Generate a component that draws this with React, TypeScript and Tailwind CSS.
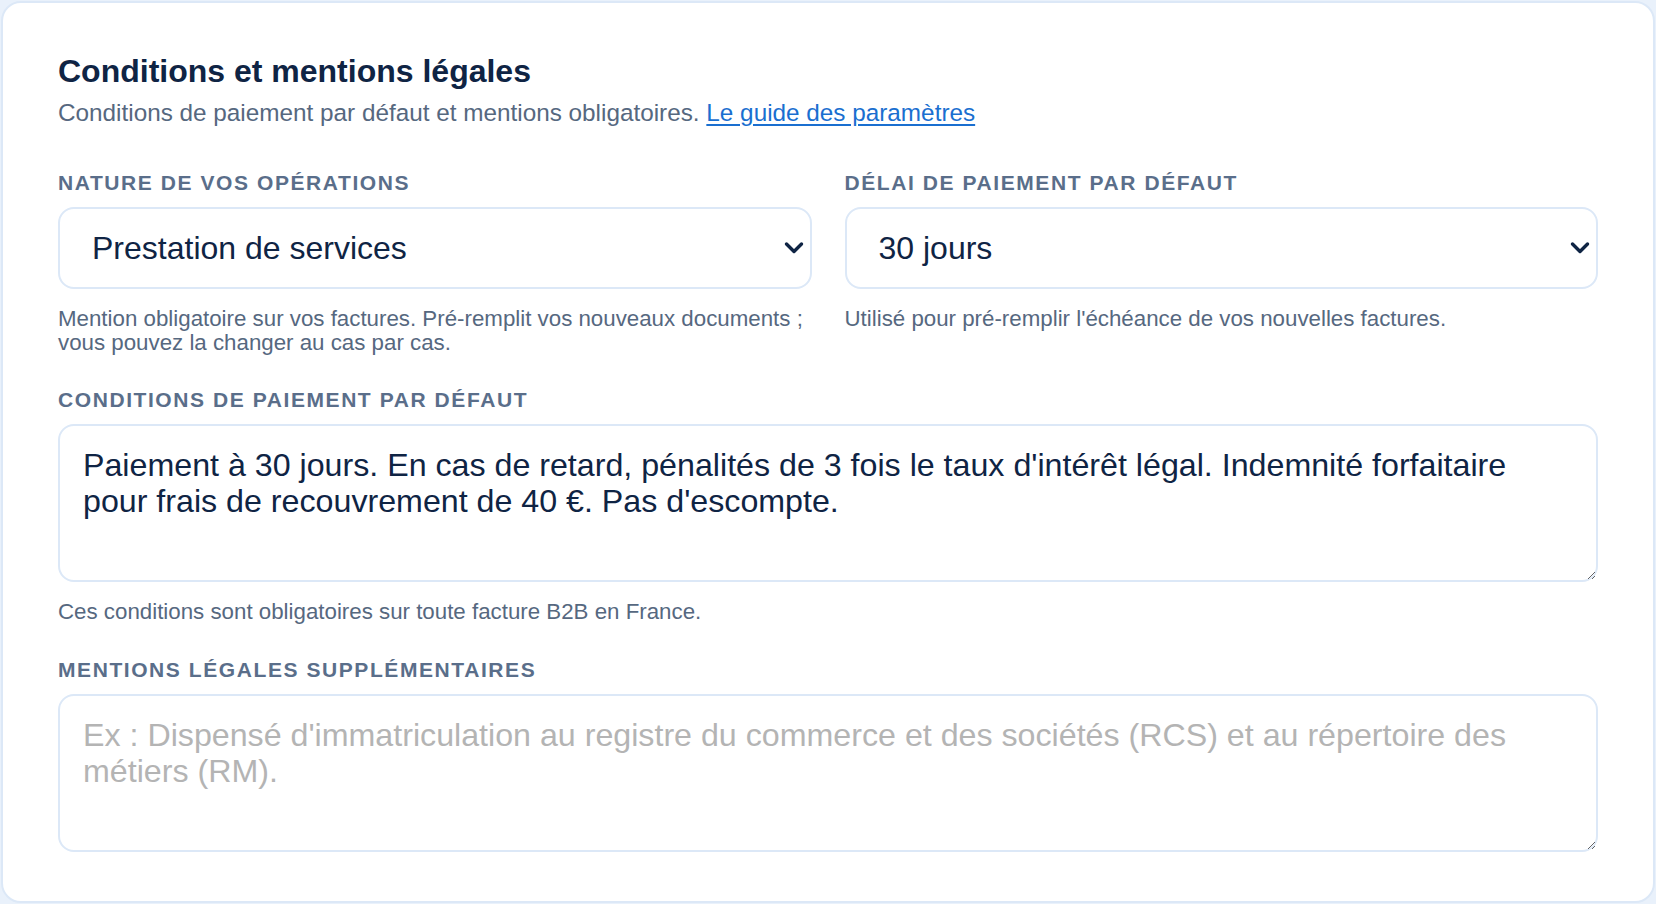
import React from "react";

function Chevron() {
  return (
    <svg
      className="pointer-events-none absolute right-[8px] top-1/2 -translate-y-1/2"
      width="20"
      height="13"
      viewBox="0 0 20 13"
      fill="none"
    >
      <path d="M2.5 2.5 L10 10 L17.5 2.5" stroke="#0f2444" strokeWidth="3.4" strokeLinecap="round" strokeLinejoin="round" />
    </svg>
  );
}

function Label({ children }: { children: React.ReactNode }) {
  return (
    <div className="mb-[10px] text-[21px] leading-[28px] font-bold uppercase tracking-[0.075em] text-[#5a6e8a]">
      {children}
    </div>
  );
}

function Select({ value, options }: { value: string; options: string[] }) {
  return (
    <div className="relative">
      <select
        defaultValue={value}
        className="block h-[82px] w-full appearance-none rounded-[16px] border-2 border-[#dce8f7] bg-white pl-[32px] pr-[40px] text-[32px] text-[#0f2444] outline-none"
      >
        {options.map((o) => (
          <option key={o} value={o}>
            {o}
          </option>
        ))}
      </select>
      <Chevron />
    </div>
  );
}

function Help({ children }: { children: React.ReactNode }) {
  return <p className="mt-[18px] text-[22.3px] leading-[24px] text-[#56687f]">{children}</p>;
}

export default function App() {
  return (
    <div className="min-h-[904px] bg-[#e9f1fb] p-[1px] font-['Liberation_Sans',Arial,Helvetica,sans-serif]">
      <div className="min-h-[902px] rounded-[20px] border-2 border-[#dce8f7] bg-white px-[55px] pt-[48px] pb-[46px]">
        <h2 className="text-[32px] leading-[40px] font-bold text-[#0f2444]">Conditions et mentions légales</h2>
        <p className="mt-[6px] text-[24.3px] leading-[32px] text-[#56687f]">
          Conditions de paiement par défaut et mentions obligatoires.{" "}
          <a href="#" className="text-[#1a6fd0] underline underline-offset-[3px]">
            Le guide des paramètres
          </a>
        </p>

        <div className="mt-[40px] grid grid-cols-2 gap-x-[33px]">
          <div>
            <Label>Nature de vos opérations</Label>
            <Select
              value="Prestation de services"
              options={["Prestation de services", "Vente de marchandises", "Mixte"]}
            />
            <Help>
              Mention obligatoire sur vos factures. Pré-remplit vos nouveaux documents ; vous pouvez la changer au cas
              par cas.
            </Help>
          </div>
          <div>
            <Label>Délai de paiement par défaut</Label>
            <Select value="30 jours" options={["À réception", "15 jours", "30 jours", "45 jours", "60 jours"]} />
            <Help>Utilisé pour pré-remplir l'échéance de vos nouvelles factures.</Help>
          </div>
        </div>

        <div className="mt-[31px]">
          <Label>Conditions de paiement par défaut</Label>
          <textarea
            defaultValue="Paiement à 30 jours. En cas de retard, pénalités de 3 fois le taux d'intérêt légal. Indemnité forfaitaire pour frais de recouvrement de 40 €. Pas d'escompte."
            className="block h-[158px] w-full rounded-[16px] border-2 border-[#dce8f7] bg-white pl-[23px] pr-[44px] pt-[21px] pb-[10px] text-[32.2px] leading-[36px] text-[#0f2444] outline-none"
          />
          <Help>Ces conditions sont obligatoires sur toute facture B2B en France.</Help>
        </div>

        <div className="mt-[32px]">
          <Label>Mentions légales supplémentaires</Label>
          <textarea
            placeholder="Ex : Dispensé d'immatriculation au registre du commerce et des sociétés (RCS) et au répertoire des métiers (RM)."
            className="block h-[158px] w-full rounded-[16px] border-2 border-[#dce8f7] bg-white pl-[23px] pr-[44px] pt-[21px] pb-[10px] text-[32.2px] leading-[36px] text-[#0f2444] outline-none placeholder:text-[#b4b4b4]"
          />
        </div>
      </div>
    </div>
  );
}
